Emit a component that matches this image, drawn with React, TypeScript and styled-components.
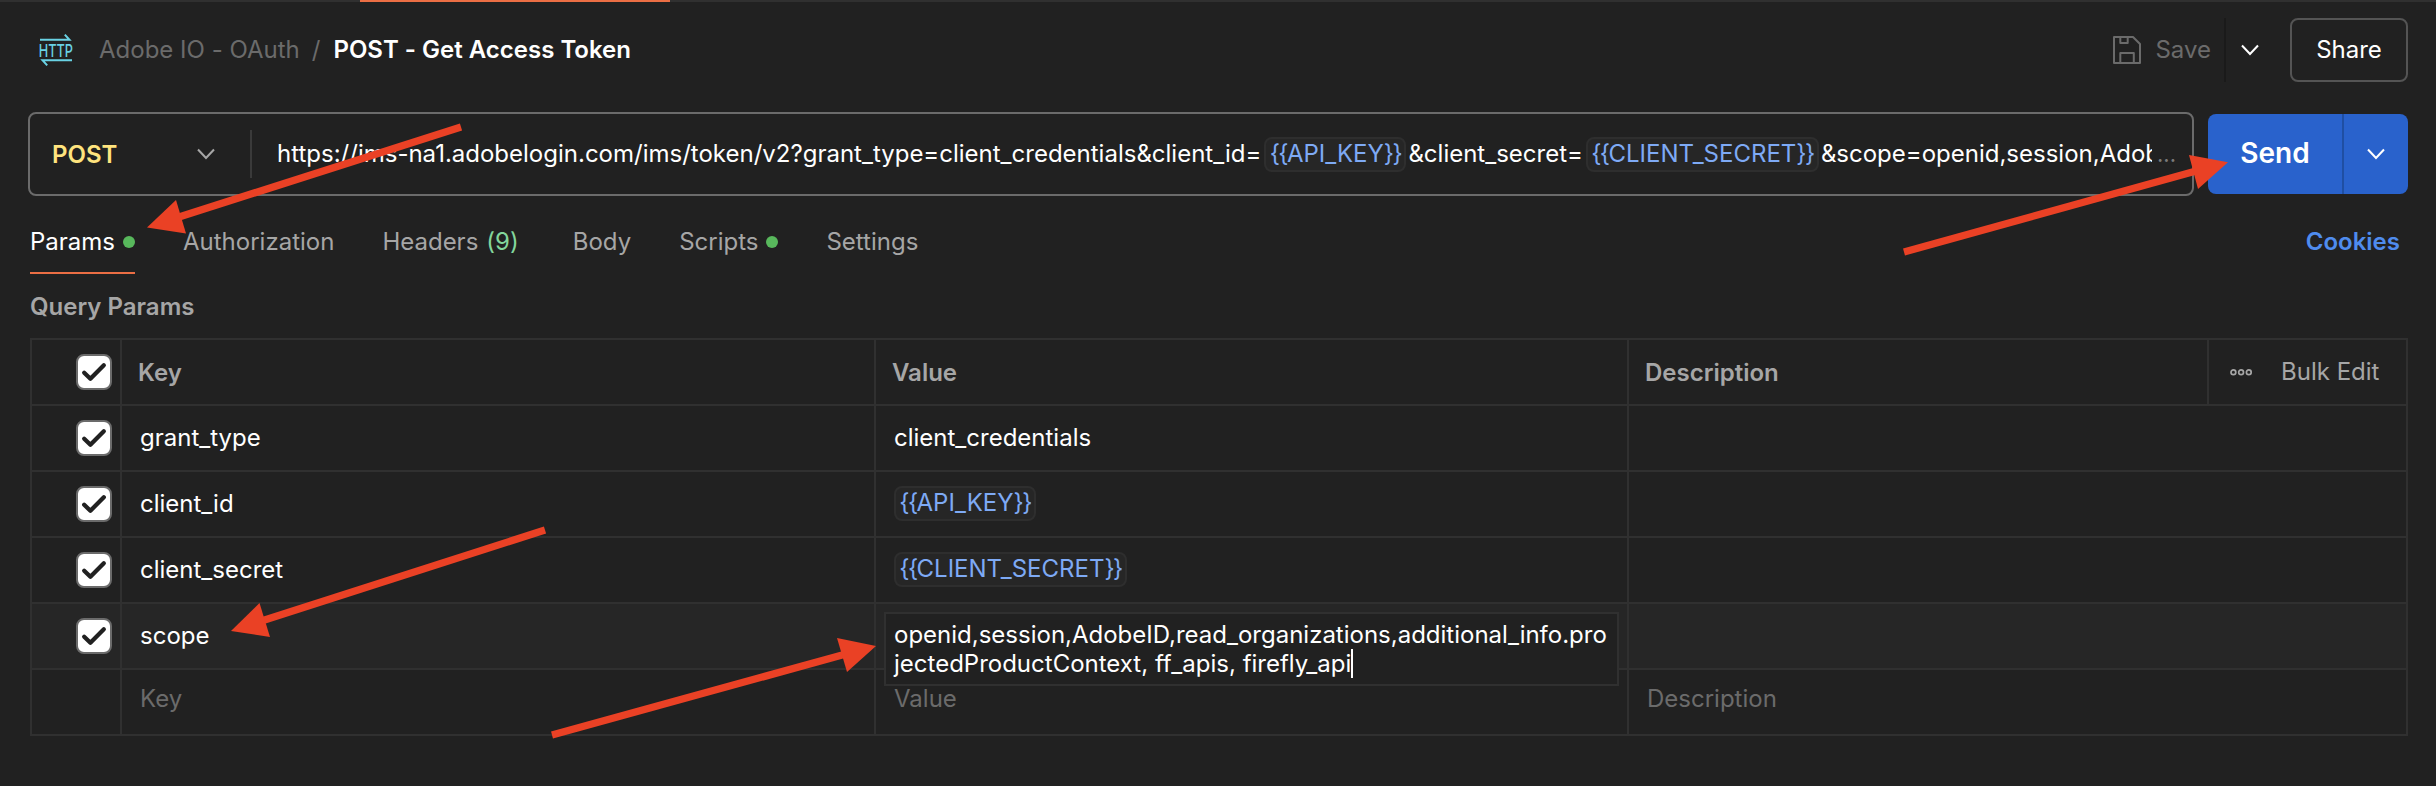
import React from "react";
import styled, { createGlobalStyle } from "styled-components";

const GlobalStyle = createGlobalStyle`
  * { box-sizing: border-box; }
  body {
    margin: 0;
    background: #212121;
    color: #fff;
    font: 400 24px/32px Inter, "Liberation Sans", sans-serif;
    font-feature-settings: "calt" 0;
  }
`;

const Page = styled.div`
  position: relative;
  width: 2436px;
  height: 786px;
  overflow: hidden;
  background: #212121;
`;

const TabStrip = styled.div`
  height: 2px;
  padding-left: 360px;
  background: #303030;
`;

const ActiveTabMark = styled.div`
  width: 310px;
  height: 2px;
  background: #eb6e44;
`;

const Header = styled.header`
  display: flex;
  align-items: center;
  justify-content: space-between;
  height: 96px;
  padding: 0 28px 0 40px;
`;

const Breadcrumb = styled.div`
  display: flex;
  align-items: center;
`;

const Collection = styled.span`
  margin-left: 26px;
  color: #6b6b6b;
`;

const Slash = styled.span`
  margin: 0 13px 0 12px;
  color: #6b6b6b;
`;

const RequestName = styled.span`
  font-weight: 600;
`;

const Actions = styled.div`
  display: flex;
  align-items: center;
`;

const SaveButton = styled.div`
  display: flex;
  align-items: center;
  gap: 14px;
  height: 64px;
  padding-right: 13px;
  border-right: 2px solid #1a1a1a;
  color: #6b6b6b;
`;

const SaveMenu = styled.div`
  display: flex;
  justify-content: center;
  width: 48px;
  margin-right: 16px;
`;

const ShareButton = styled.div`
  display: flex;
  align-items: center;
  justify-content: center;
  width: 118px;
  height: 64px;
  border: 2px solid #545454;
  border-radius: 8px;
`;

const RequestBar = styled.div`
  display: flex;
  align-items: center;
  gap: 14px;
  margin: 14px 28px 0;
`;

const UrlBox = styled.div`
  display: flex;
  align-items: center;
  flex: 1;
  min-width: 0;
  height: 84px;
  border: 2px solid #6b6b6b;
  border-radius: 8px;
`;

const Method = styled.div`
  display: flex;
  align-items: center;
  justify-content: space-between;
  width: 222px;
  height: 48px;
  padding: 0 35px 0 22px;
  border-right: 2px solid #3a3a3a;
  color: #ffe47e;
  font-weight: 600;
`;

const MethodName = styled.span`
  padding-top: 2px;
`;

const Url = styled.div`
  display: flex;
  align-items: center;
  width: 1875px;
  margin-left: 25px;
  overflow: hidden;
  white-space: nowrap;
`;

const Ellipsis = styled.span`
  margin-left: 5px;
  color: #7a7a7a;
  font-size: 22px;
`;

const VariableChip = styled.span<{ $inline?: boolean }>`
  display: flex;
  align-items: center;
  flex: none;
  height: 35px;
  margin: ${(p) => (p.$inline ? "1px 2px 0 3px" : "0 0 1px")};
  padding: 0 3.3px 1px;
  border: 2px solid #2e2e2e;
  border-radius: 8px;
  background: #262626;
  color: #7eaaf5;
`;

const Brace = styled.span`
  letter-spacing: -1.6px;
`;

const SendGroup = styled.div`
  display: flex;
  width: 200px;
  height: 80px;
  border-radius: 8px;
  background: #2962cc;
`;

const SendButton = styled.div`
  display: flex;
  align-items: center;
  justify-content: center;
  width: 136px;
  padding-bottom: 2px;
  border-right: 2px solid #1f4fa3;
  font-size: 28px;
  font-weight: 600;
`;

const SendMenu = styled.div`
  display: flex;
  align-items: center;
  justify-content: center;
  flex: 1;
`;

const Tabs = styled.nav`
  display: flex;
  align-items: flex-start;
  gap: 48px;
  height: 78px;
  padding: 0 36px 0 30px;
`;

const Tab = styled.div<{ $active?: boolean }>`
  display: flex;
  align-items: center;
  height: 78px;
  padding-bottom: ${(p) => (p.$active ? "0" : "2px")};
  border-bottom: ${(p) => (p.$active ? "2px solid #eb6e44" : "0")};
  color: ${(p) => (p.$active ? "#fff" : "#a6a6a6")};
  & > span { padding-top: 16px; }
`;

const Count = styled.span`
  margin: 0 6px 0 8px;
  color: #83d69c;
`;

const Dot = styled.i`
  width: 12px;
  height: 12px;
  margin: 16px 0 0 8px;
  border-radius: 50%;
  background: #58b85c;
`;

const Cookies = styled.div`
  margin-left: auto;
  padding-top: 30px;
  color: #4f8cee;
  font-weight: 600;
`;

const SectionTitle = styled.h2`
  height: 64px;
  margin: 0;
  padding: 17px 30px 15px;
  color: #a6a6a6;
  font-size: 24px;
  font-weight: 600;
`;

const Table = styled.div`
  margin: 0 28px 0 30px;
  border: 2px solid #303030;
  border-bottom: 0;
`;

const Row = styled.div<{ $head?: boolean; $active?: boolean }>`
  display: grid;
  grid-template-columns: ${(p) => (p.$head ? "90px 754px 753px 580px 1fr" : "90px 754px 753px 1fr")};
  height: 66px;
  border-bottom: 2px solid #303030;
  background: ${(p) => (p.$active ? "#262626" : "transparent")};
`;

const Cell = styled.div<{ $head?: boolean; $muted?: boolean }>`
  position: relative;
  display: flex;
  align-items: center;
  padding: ${(p) => (p.$head ? "2px 0 0 16px" : p.$muted ? "0 0 6px 18px" : "0 0 0 18px")};
  border-right: 2px solid #303030;
  color: ${(p) => (p.$head ? "#a6a6a6" : p.$muted ? "#6b6b6b" : "#fff")};
  font-weight: ${(p) => (p.$head ? 600 : 400)};
  &:last-child { border-right: 0; }
`;

const CheckCell = styled(Cell)`
  padding: 0 0 0 44px;
`;

const Checkbox = styled.span`
  display: flex;
  align-items: center;
  justify-content: center;
  width: 36px;
  height: 36px;
  border: 2px solid #6b6b6b;
  border-radius: 8px;
  background: #fff;
`;

const BulkCell = styled(Cell)`
  gap: 28px;
  padding: 0 0 0 21px;
  color: #a6a6a6;
`;

const ValueEditor = styled.div`
  position: absolute;
  z-index: 1;
  top: 8px;
  left: 8px;
  width: 735px;
  height: 74px;
  padding: 6px 8px;
  border: 2px solid #303030;
  background: #212121;
  line-height: 29px;
`;

const Caret = styled.span`
  display: inline-block;
  width: 2px;
  height: 29px;
  background: #fff;
  vertical-align: top;
`;

const Annotations = styled.svg`
  position: absolute;
  inset: 0;
  z-index: 2;
`;

const Chevron = ({ color = "#fff" }: { color?: string }) => (
  <svg width="18" height="12" viewBox="0 0 18 12" fill="none" stroke={color} strokeWidth="2">
    <path d="M1 1.5 9 10 17 1.5" />
  </svg>
);

const HttpIcon = () => (
  <svg width="33" height="34" viewBox="0 0 33 34" overflow="visible" fill="none" stroke="#69d2e4" strokeWidth="2">
    <path d="M0 6.8H29.5L24.8 1.6" />
    <path d="M32 27.2H2.5L7.2 32.4" />
    <text x="-1.2" y="23.7" fontFamily="Inter" fontSize="17.6" fontWeight="500" textLength="34.2" lengthAdjust="spacingAndGlyphs" fill="#69d2e4" stroke="none">HTTP</text>
  </svg>
);

const SaveIcon = () => (
  <svg width="28" height="28" viewBox="0 0 28 28" fill="none" stroke="#6b6b6b" strokeWidth="2" strokeLinejoin="round">
    <path d="M1 1H20L27 8V27H1Z" />
    <path d="M7.3 1V7H14.7V1" />
    <path d="M7.3 27V17H20.8V27" />
  </svg>
);

const Check = () => (
  <svg width="26" height="20" viewBox="0 0 26 20" fill="none" stroke="#212121" strokeWidth="4.3" strokeLinecap="round" strokeLinejoin="round">
    <path d="M3.2 10.8 9.4 16.7 22.8 3.3" />
  </svg>
);

const MoreIcon = () => (
  <svg width="23" height="8" viewBox="0 0 23 8" fill="none" stroke="#a6a6a6" strokeWidth="1.7">
    <circle cx="3.4" cy="4.2" r="2.4" />
    <circle cx="11.1" cy="4.2" r="2.4" />
    <circle cx="18.8" cy="4.2" r="2.4" />
  </svg>
);

const Variable = ({ name, inline }: { name: string; inline?: boolean }) => (
  <VariableChip $inline={inline}>
    <span><Brace>{"{{"}</Brace>{name}<Brace>{"}}"}</Brace></span>
  </VariableChip>
);

const arrows = [
  { tail: [461, 127], neck: [179, 217], head: "147,227.5 176,200 186,233.5" },
  { tail: [1904, 252], neck: [2196, 171], head: "2228,162.3 2189,155 2198,189" },
  { tail: [545, 530], neck: [263, 620.5], head: "231,631 259.5,603 270,637" },
  { tail: [552, 735], neck: [844, 654.5], head: "876,646 837,638 847,672" },
];

const rows = [
  { key: "grant_type", value: "client_credentials" },
  { key: "client_id", variable: "API_KEY" },
  { key: "client_secret", variable: "CLIENT_SECRET" },
];

export default function App() {
  return (
    <Page>
      <GlobalStyle />
      <TabStrip><ActiveTabMark /></TabStrip>
      <Header>
        <Breadcrumb>
          <HttpIcon />
          <Collection>Adobe IO - OAuth</Collection>
          <Slash>/</Slash>
          <RequestName>POST - Get Access Token</RequestName>
        </Breadcrumb>
        <Actions>
          <SaveButton><SaveIcon />Save</SaveButton>
          <SaveMenu><Chevron /></SaveMenu>
          <ShareButton>Share</ShareButton>
        </Actions>
      </Header>
      <RequestBar>
        <UrlBox>
          <Method><MethodName>POST</MethodName><Chevron color="#a6a6a6" /></Method>
          <Url>
            <span>https://ims-na1.adobelogin.com/ims/token/v2?grant_type=client_credentials&amp;client_id=</span>
            <Variable inline name="API_KEY" />
            <span>&amp;client_secret=</span>
            <Variable inline name="CLIENT_SECRET" />
            <span>&amp;scope=openid,session,Adob</span>
          </Url>
          <Ellipsis>...</Ellipsis>
        </UrlBox>
        <SendGroup>
          <SendButton>Send</SendButton>
          <SendMenu><Chevron /></SendMenu>
        </SendGroup>
      </RequestBar>
      <Tabs>
        <Tab $active><span>Params</span><Dot /></Tab>
        <Tab><span>Authorization</span></Tab>
        <Tab><span>Headers</span><Count>(9)</Count></Tab>
        <Tab><span>Body</span></Tab>
        <Tab><span>Scripts</span><Dot /></Tab>
        <Tab><span>Settings</span></Tab>
        <Cookies>Cookies</Cookies>
      </Tabs>
      <SectionTitle>Query Params</SectionTitle>
      <Table>
        <Row $head>
          <CheckCell><Checkbox><Check /></Checkbox></CheckCell>
          <Cell $head>Key</Cell>
          <Cell $head>Value</Cell>
          <Cell $head>Description</Cell>
          <BulkCell><MoreIcon />Bulk Edit</BulkCell>
        </Row>
        {rows.map((row) => (
          <Row key={row.key}>
            <CheckCell><Checkbox><Check /></Checkbox></CheckCell>
            <Cell>{row.key}</Cell>
            <Cell>{row.variable ? <Variable name={row.variable} /> : row.value}</Cell>
            <Cell />
          </Row>
        ))}
        <Row $active>
          <CheckCell><Checkbox><Check /></Checkbox></CheckCell>
          <Cell>scope</Cell>
          <Cell>
            <ValueEditor>
              openid,session,AdobeID,read_organizations,additional_info.pro<br />
              jectedProductContext, ff_apis, firefly_api<Caret />
            </ValueEditor>
          </Cell>
          <Cell />
        </Row>
        <Row>
          <CheckCell />
          <Cell $muted>Key</Cell>
          <Cell $muted>Value</Cell>
          <Cell $muted>Description</Cell>
        </Row>
      </Table>
      <Annotations width="2436" height="786" viewBox="0 0 2436 786">
        {arrows.map((a) => (
          <g key={a.head} fill="#ea4125" stroke="#ea4125">
            <line x1={a.tail[0]} y1={a.tail[1]} x2={a.neck[0]} y2={a.neck[1]} strokeWidth="7.3" />
            <polygon points={a.head} stroke="none" />
          </g>
        ))}
      </Annotations>
    </Page>
  );
}
